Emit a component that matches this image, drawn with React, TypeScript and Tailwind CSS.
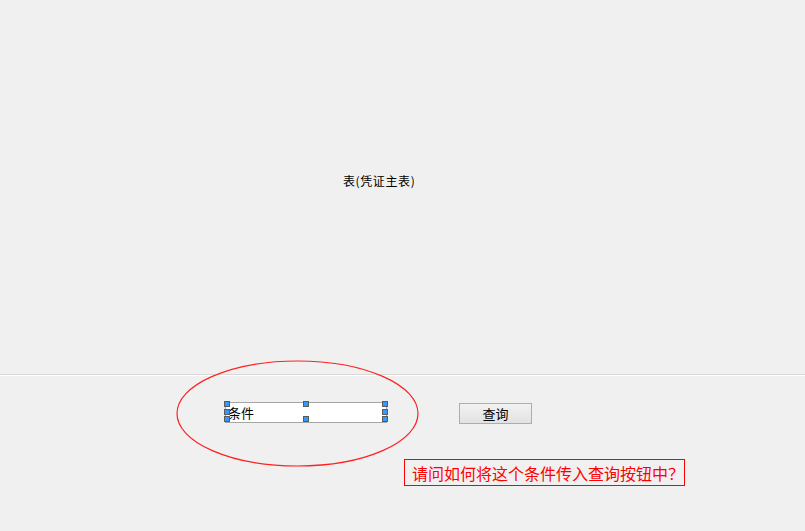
import React from "react";

const font = { fontFamily: '"Noto Sans CJK SC", "Liberation Sans", sans-serif' };

function Handle({ className }: { className: string }) {
  return <span className={`absolute h-[6px] w-[6px] border border-[#5a5a5a] bg-[#3399ff] ${className}`} />;
}

function SelectedTextBox() {
  return (
    <div className="relative h-[21px] w-[162px]">
      <div className="flex h-full w-full items-center border border-[#a5a5a5] bg-white pl-[2px] text-[13px] leading-none text-black">
        条件
      </div>
      <Handle className="left-[-1px] top-[-1px]" />
      <Handle className="left-[-1px] top-[7px]" />
      <Handle className="left-[-1px] top-[14px]" />
      <Handle className="left-[78px] top-[-1px]" />
      <Handle className="left-[78px] top-[14px]" />
      <Handle className="right-[-1px] top-[-1px]" />
      <Handle className="right-[-1px] top-[7px]" />
      <Handle className="right-[-1px] top-[14px]" />
    </div>
  );
}

export default function App() {
  return (
    <div className="h-[531px] w-[805px] overflow-hidden bg-[#f0f0f0]" style={font}>
      <div className="h-[376px] border-b border-b-white">
        <div className="h-[375px] border-b border-b-[#d9d9d9] pl-[343px] pt-[173px] text-[12px] leading-[16px] tracking-[0.6px] text-black">
          表(凭证主表)
        </div>
      </div>

      <div className="relative h-[155px]">
        <svg className="absolute left-0 top-[-16px]" width="805" height="120" viewBox="0 0 805 120">
          <ellipse cx="297.5" cy="53.5" rx="120.5" ry="52.5" fill="none" stroke="#ff2020" strokeWidth="1.2" />
        </svg>

        <div className="flex items-start pt-[26px] pl-[225px]">
          <SelectedTextBox />
          <button className="ml-[72px] mt-[1px] flex h-[21px] w-[73px] items-center justify-center border border-[#adadad] bg-gradient-to-b from-[#f2f2f2] to-[#e2e2e2] text-[13px] leading-none text-black">
            查询
          </button>
        </div>

        <div className="ml-[404px] mt-[35px] flex h-[27px] w-[281px] items-center border border-[#ff0000] pl-[7px] text-[16px] leading-none text-[#ff0000]">
          请问如何将这个条件传入查询按钮中？
        </div>
      </div>
    </div>
  );
}
